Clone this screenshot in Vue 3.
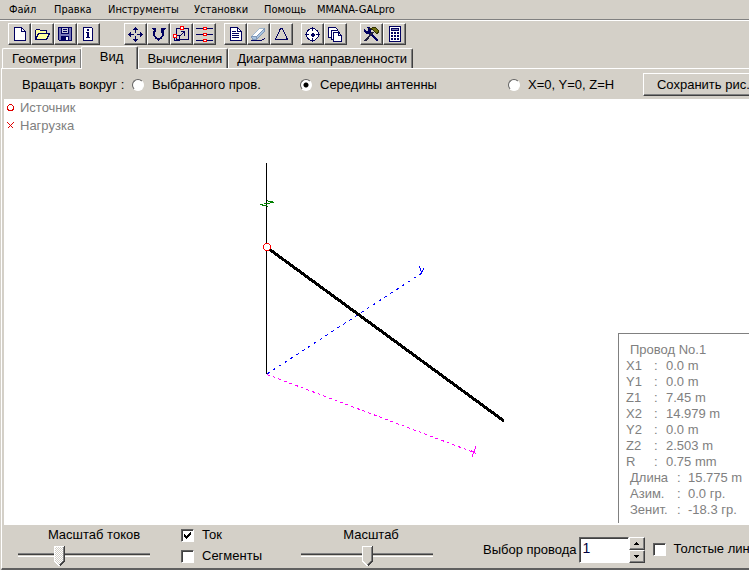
<script setup>
import { ref } from 'vue'

const menu = ['Файл', 'Правка', 'Инструменты', 'Установки', 'Помощь', 'MMANA-GALpro']
const tabs = ['Геометрия', 'Вид', 'Вычисления', 'Диаграмма направленности']
const activeTab = ref('Вид')

const N = '#000060'
const page = 'M3.5 1.5h7l4 4v9h-11z'
const toolGroups = [
  [
    { name: 'Новый', shapes: [{ d: page, fill: '#fff' }, { d: 'M10.5 1.5v4h4' }] },
    {
      name: 'Открыть',
      shapes: [
        { d: 'M1.5 13.5v-9l1-1h3l1 1h6v3', fill: '#ffffa0' },
        { d: 'M1.5 13.5l3-6h11l-3 6z', fill: '#ffffa0' }
      ]
    },
    {
      name: 'Сохранить',
      shapes: [
        { d: 'M1.5 1.5h13v13h-12l-1-1z', fill: '#7878b8' },
        { d: 'M4.5 1.5h7v6h-7z', fill: '#c8c8d8' },
        { d: 'M6 3.5h4M6 5.5h4' },
        { d: 'M4.5 10.5h7v4h-7z', fill: N },
        { d: 'M9 11h2v3h-2z', fill: '#fff', stroke: 'none' }
      ]
    },
    {
      name: 'Информация',
      shapes: [
        { d: 'M3.5 1.5h8l1 1v12h-9z', fill: '#fff' },
        { d: 'M7 3h2v2h-2zM6 6h3v5h1v1h-4v-1h1v-4h-1z', fill: N, stroke: 'none' }
      ]
    }
  ],
  [
    {
      name: 'Переместить',
      shapes: [
        { d: 'M8.500 1v6M8.500 10v6M1 8.500h6M10 8.500h6' },
        {
          d: 'M8 1h1v1h1v1h1v1h-5v-1h1v-1h1zM8 16h1v-1h1v-1h1v-1h-5v1h1v1h1zM1 8v1h1v1h1v1h1v-5h-1v1h-1v1zM16 8v1h-1v1h-1v1h-1v-5h1v1h1v1z',
          fill: N,
          stroke: 'none'
        }
      ]
    },
    {
      name: 'Повернуть',
      shapes: [
        { d: 'M3.500 5v4l2 3 3 1 3-1 2-3v-4M4.500 5v4l2 3 2 2 2-2 2-3v-4' },
        { d: 'M1 2h5v5zM16 2h-5v5z', fill: N, stroke: 'none' }
      ]
    },
    {
      name: 'Масштабировать',
      shapes: [
        { d: 'M3.500 2.500h12v11h-12z' },
        { d: 'M1.500 9.500h5v5h-5zM6.500 10.500l5-5M8 5.500h3.500v4' },
        { d: 'M7.500.5h3v3h-3zM.5 8.500h3v3h-3z', stroke: '#f00', fill: '#fff' }
      ]
    },
    {
      name: 'Сегментация',
      shapes: [
        { d: 'M0 2.500h17M0 8.500h17M0 14.500h17' },
        { d: 'M7.500 1.500h3v2h-3zM7.500 7.500h3v2h-3zM7.500 13.500h3v2h-3z', stroke: '#f00', fill: '#fff' }
      ]
    }
  ],
  [
    {
      name: 'Описание',
      shapes: [{ d: page, fill: '#fff' }, { d: 'M10.5 1.5v4h4M5 5.5h4M5 7.5h7M5 9.5h7M5 11.5h7' }]
    },
    {
      name: 'Очистить',
      shapes: [
        { d: 'M1 14.5h10l4-2', stroke: N },
        { d: 'M1.5 10.5l8-8h5l-8 8z', fill: '#fff', stroke: '#a0b8d0' },
        { d: 'M1.5 10.5h5v3h-4zM6.5 10.5l8-8v3l-8 8z', fill: '#a8c4e0', stroke: '#8098b8' }
      ]
    },
    { name: 'Треугольник', shapes: [{ d: 'M2.5 13.5h12l-5-11h-2z' }] }
  ],
  [
    {
      name: 'Центр',
      shapes: [
        { d: 'M8.5 2.5a6 6 0 1 1 0 12a6 6 0 1 1 0-12', fill: '#fff' },
        { d: 'M8.5 1v4M8.5 12v4M1 8.5h4M12 8.5h4' },
        { d: 'M8 7h1v1h1v1h-1v1h-1v-1h-1v-1h1z', fill: N }
      ]
    },
    {
      name: 'Копировать',
      shapes: [
        { d: 'M1.5 1.5h7l2 2v8h-9z', fill: '#fff' },
        { d: 'M4.5 4.5h6l2 2v7h-8z', fill: '#fff' },
        { d: 'M6.500 6.500h5l3 3v6h-8z', fill: '#fff' },
        { d: 'M11.5 6.5v3h3' }
      ]
    }
  ],
  [
    {
      name: 'Настройки',
      shapes: [
        { d: 'M6 6l9 9', width: 2 },
        { d: 'M3 1l2 2v2h-2l-2-2v3l2 2h3l2-2v-3l-2-2z', fill: N, stroke: 'none' },
        { d: 'M2 15l8-9', width: 2, stroke: '#202040' },
        { d: 'M7.500 2.500l3-1h2l3 3v2l-2 1-4-4z', fill: '#707010', stroke: '#303000' }
      ]
    },
    {
      name: 'Калькулятор',
      shapes: [
        { d: 'M3.5.5h11v15h-11z', fill: '#fff' },
        { d: 'M5.5 2.5h7v2h-7z', fill: '#8080b0' },
        { d: 'M5 7h2M8 7h2M11 7h2M5 10h2M8 10h2M11 10h2M5 13h2M8 13h2M11 13h2', width: 2 }
      ]
    }
  ]
]

const center = ref('antenna')
const showCurrent = ref(true)
const showSegments = ref(false)
const thickLines = ref(false)
const currentScale = ref(30)
const scale = ref(50)
const wire = ref(1)

const coords = [
  ['X1', '0.0 m'],
  ['Y1', '0.0 m'],
  ['Z1', '7.45 m'],
  ['X2', '14.979 m'],
  ['Y2', '0.0 m'],
  ['Z2', '2.503 m'],
  ['R', '0.75 mm']
]
const angles = [
  ['Длина', '15.775 m'],
  ['Азим.', '0.0 гр.'],
  ['Зенит.', '-18.3 гр.']
]
</script>

<template>
  <div class="window">
    <nav class="menu">
      <button v-for="m in menu" :key="m" type="button">{{ m }}</button>
    </nav>

    <div class="toolbar">
      <div v-for="(group, g) in toolGroups" :key="g" class="group">
        <button v-for="t in group" :key="t.name" type="button" class="tool" :aria-label="t.name">
          <svg width="17" height="17" viewBox="0 0 17 17">
            <path
              v-for="(s, i) in t.shapes"
              :key="i"
              :d="s.d"
              :fill="s.fill || 'none'"
              :stroke="s.stroke || N"
              :stroke-width="s.width || 1"
            />
          </svg>
        </button>
      </div>
    </div>

    <div class="tabs" role="tablist">
      <button
        v-for="t in tabs"
        :key="t"
        type="button"
        role="tab"
        class="tab"
        :class="{ active: t === activeTab }"
        :aria-selected="t === activeTab"
        @click="activeTab = t"
      >{{ t }}</button>
    </div>

    <main class="sheet">
      <div class="rotate">
        <span class="caption">Вращать вокруг :</span>
        <label><input v-model="center" type="radio" name="center" value="wire" />Выбранного пров.</label>
        <label><input v-model="center" type="radio" name="center" value="antenna" />Середины антенны</label>
        <label><input v-model="center" type="radio" name="center" value="origin" />X=0, Y=0, Z=H</label>
        <button type="button" class="save">Сохранить рис...</button>
      </div>

      <section class="canvas">
        <ul class="legend">
          <li>
            <svg width="8" height="8" viewBox="0 0 8 8"><circle cx="3.5" cy="3.5" r="3" /></svg>
            Источник
          </li>
          <li>
            <svg width="8" height="8" viewBox="0 0 8 8"><path d="M.5.5l6 6M6.5.5l-6 6" /></svg>
            Нагрузка
          </li>
        </ul>
        <svg class="scene" width="520" height="370" viewBox="0 0 520 370">
          <path d="M262.5 64v211" stroke="#000" />
          <path
            d="M256 105.500h3M258 106.500h5M260 104.500h6M266 103.500h4M264 102.500h5M263 101.500h1M263 107.500h1"
            stroke="#008000"
          />
          <path d="M263 275L418 174" stroke="#00f" stroke-dasharray="3 4" />
          <path d="M415 167l3 7M420 169l-3 6" stroke="#00f" />
          <path d="M263 275.500L470 353.500" stroke="#f0f" stroke-dasharray="3 3" />
          <path d="M472 347l-4 11M467 351l5 4" stroke="#f0f" />
          <path d="M265 150L500 322" stroke="#000" stroke-width="3" />
          <circle cx="263" cy="148" r="3.500" fill="#fff" stroke="#f00" />
        </svg>
        <div class="info">
          <div class="title">Провод No.1</div>
          <dl class="coords">
            <template v-for="[k, v] in coords" :key="k">
              <dt>{{ k }}</dt>
              <dd>:</dd>
              <dd>{{ v }}</dd>
            </template>
          </dl>
          <dl class="angles">
            <template v-for="[k, v] in angles" :key="k">
              <dt>{{ k }}</dt>
              <dd>:</dd>
              <dd>{{ v }}</dd>
            </template>
          </dl>
        </div>
      </section>

      <footer class="controls">
        <div class="slider">
          <label for="current-scale" class="wide">Масштаб токов</label>
          <input id="current-scale" v-model="currentScale" type="range" class="hatched" />
        </div>
        <div class="checks">
          <label><input v-model="showCurrent" type="checkbox" />Ток</label>
          <label><input v-model="showSegments" type="checkbox" />Сегменты</label>
        </div>
        <div class="slider">
          <label for="scale">Масштаб</label>
          <input id="scale" v-model="scale" type="range" />
        </div>
        <div class="picker">
          <label for="wire">Выбор провода</label>
          <input id="wire" v-model="wire" type="text" />
          <div class="spin">
            <button type="button" aria-label="Следующий" @click="wire++">
              <svg width="5" height="3" viewBox="0 0 5 3"><path d="M2 0h1v1h1v1h1v1h-5v-1h1v-1h1z" /></svg>
            </button>
            <button type="button" aria-label="Предыдущий" @click="wire--">
              <svg width="5" height="3" viewBox="0 0 5 3"><path d="M0 0h5v1h-1v1h-1v1h-1v-1h-1v-1h-1z" /></svg>
            </button>
          </div>
          <label class="thick"><input v-model="thickLines" type="checkbox" />Толстые линии</label>
        </div>
      </footer>
    </main>
  </div>
</template>

<style>
body {
  background: #d4d0c8;
  overflow: hidden;
}
</style>

<style scoped>
* {
  box-sizing: border-box;
}
.window {
  display: flex;
  flex-direction: column;
  min-height: 100vh;
  overflow: hidden;
  background: #d4d0c8;
  color: #000;
  font: 13px/16px "Liberation Sans", Arial, sans-serif;
  white-space: nowrap;
}
button,
input {
  margin: 0;
  padding: 0;
  border: 0;
  border-radius: 0;
  appearance: none;
  background: none;
  color: inherit;
  font: inherit;
}
svg {
  display: block;
  flex: none;
  shape-rendering: crispEdges;
}
.menu {
  display: grid;
  grid-template-columns: 45px 54px 86px 70px 53px auto;
  justify-content: start;
  justify-items: start;
  height: 21px;
  padding: 0 9px 1px;
  border-bottom: 1px solid #fff;
  box-shadow: inset 0 -1px #808080;
  font: 11px/16px "DejaVu Sans Condensed", "DejaVu Sans", sans-serif;
}
.toolbar {
  display: flex;
  padding: 2px 8px 0;
}
.group {
  display: flex;
  margin-right: 8px;
}
.group:nth-child(1) {
  margin-right: 24px;
}
.group:nth-child(4) {
  margin-right: 13px;
}
.tool {
  display: flex;
  align-items: center;
  justify-content: center;
  width: 23px;
  height: 22px;
  border: 1px solid;
  border-color: #fff #404040 #404040 #fff;
  box-shadow: inset -1px -1px #808080;
}
.tabs {
  position: relative;
  display: flex;
  align-items: flex-end;
  height: 23px;
  padding-left: 2px;
}
.tab {
  height: 20px;
  padding: 0 5px 0 9px;
  border: 1px solid;
  border-color: #fff #404040 transparent #fff;
  border-bottom: 0;
  border-radius: 2px 2px 0 0;
  box-shadow: inset -1px 0 #808080;
}
.tab:nth-child(n + 3) {
  padding-left: 8px;
}
.tab.active {
  z-index: 1;
  height: 23px;
  margin: 0 0 -1px -1px;
  padding: 0 14px 2px 18px;
  background: #d4d0c8;
}
.sheet {
  display: flex;
  flex: 1;
  flex-direction: column;
  margin-left: 1px;
  border-top: 1px solid #fff;
  border-left: 1px solid #fff;
  border-bottom: 2px solid #606060;
}
.rotate {
  display: grid;
  grid-template-columns: 110px 168px 208px 135px 128px;
  align-items: center;
  height: 30px;
  padding: 1px 0 0 20px;
}
.rotate label,
.checks label,
.thick {
  display: flex;
  align-items: center;
}
input[type="radio"] {
  width: 12px;
  height: 12px;
  margin-right: 8px;
  border: 1px solid;
  border-color: #606060 #fff #fff #606060;
  border-radius: 50%;
  background: #fff;
}
input[type="radio"]:checked {
  background: radial-gradient(circle, #000 2px, #fff 3px);
}
.save {
  height: 23px;
  border: 1px solid;
  border-color: #fff #404040 #404040 #fff;
  box-shadow: inset -1px -1px #808080;
}
.canvas {
  position: relative;
  flex: 1;
  margin-left: 2px;
  background: #fff;
  color: #808080;
}
.legend {
  position: absolute;
  top: 0;
  left: 3px;
  margin: 0;
  padding: 0;
  list-style: none;
  line-height: 18px;
}
.legend li {
  display: flex;
  align-items: center;
  gap: 5px;
}
.legend svg,
.scene {
  fill: none;
}
.legend svg {
  stroke: #e00000;
}
.info {
  position: absolute;
  right: -20px;
  bottom: 2px;
  width: 151px;
  padding: 8px 7px 5px;
  border: solid #808080;
  border-width: 1px 0 0 1px;
  background: #fff;
}
.info .title {
  padding-left: 4px;
}
.info dl {
  display: grid;
  margin: 0;
}
.info dd {
  margin: 0;
}
.coords {
  grid-template-columns: 28px 12px auto;
}
.angles {
  grid-template-columns: 47px 11px auto;
  padding-left: 4px;
}
.controls {
  display: grid;
  grid-template-columns: 163px 120px 182px 1fr;
  height: 43px;
  padding-left: 16px;
}
.slider {
  width: 132px;
  padding-top: 2px;
}
.slider label {
  display: block;
  padding-left: 8px;
  text-align: center;
}
.slider .wide {
  padding-left: 20px;
}
input[type="range"] {
  display: block;
  width: 132px;
  height: 20px;
  margin-top: 3px;
}
input[type="range"]::-webkit-slider-runnable-track {
  height: 20px;
  background: linear-gradient(#808080 0 1px, #404040 1px 2px, #d4d0c8 2px 3px, #fff 3px) 0 7px / 100% 4px no-repeat;
}
input[type="range"]::-webkit-slider-thumb {
  width: 11px;
  height: 20px;
  appearance: none;
  background: url("data:image/svg+xml,%3Csvg xmlns='http://www.w3.org/2000/svg' width='11' height='20' shape-rendering='crispEdges'%3E%3Cpath d='M0 0h11v15l-5 5h-1l-5-5z' fill='%23d4d0c8'/%3E%3Cpath d='M9.500 1v14l-4 4' fill='none' stroke='%23808080'/%3E%3Cpath d='M10.500 0v15l-5 5' fill='none' stroke='%23404040'/%3E%3Cpath d='M10 .5H.5v14.500l5 5' fill='none' stroke='%23fff'/%3E%3C/svg%3E");
}
input.hatched::-webkit-slider-thumb {
  background: url("data:image/svg+xml,%3Csvg xmlns='http://www.w3.org/2000/svg' width='11' height='20' shape-rendering='crispEdges'%3E%3Cdefs%3E%3Cpattern id='h' width='2' height='2' patternUnits='userSpaceOnUse'%3E%3Cpath d='M0 0h2v2H0z' fill='%23d4d0c8'/%3E%3Cpath d='M0 0h1v1H0zM1 1h1v1H1z' fill='%23fff'/%3E%3C/pattern%3E%3C/defs%3E%3Cpath d='M0 0h11v15l-5 5h-1l-5-5z' fill='url(%23h)'/%3E%3Cpath d='M9.500 1v14l-4 4' fill='none' stroke='%23808080'/%3E%3Cpath d='M10.500 0v15l-5 5' fill='none' stroke='%23404040'/%3E%3Cpath d='M10 .5H.5v14.500l5 5' fill='none' stroke='%23fff'/%3E%3C/svg%3E");
}
.checks {
  display: flex;
  flex-direction: column;
  gap: 5px;
  padding-top: 2px;
}
input[type="checkbox"] {
  width: 13px;
  height: 13px;
  margin-right: 8px;
  border: 1px solid;
  border-color: #606060 #fff #fff #606060;
  background: #fff;
  box-shadow: inset 1px 1px #404040;
}
input[type="checkbox"]:checked {
  background: #fff url("data:image/svg+xml,%3Csvg xmlns='http://www.w3.org/2000/svg' width='11' height='11' shape-rendering='crispEdges'%3E%3Cpath d='M2 4v3l2 2 5-5v-3l-5 5z'/%3E%3C/svg%3E") no-repeat;
}
.picker {
  display: flex;
  align-items: flex-start;
  padding-top: 12px;
}
.picker > label {
  margin: 5px 2px 0 0;
}
.picker input[type="text"] {
  width: 50px;
  height: 26px;
  padding: 0 0 4px 3px;
  border: 1px solid;
  border-color: #606060 #fff #fff #606060;
  background: #fff;
  box-shadow: inset 1px 1px #404040;
  color: #000040;
  font-size: 14px;
}
.spin {
  display: grid;
  width: 16px;
  height: 26px;
  margin-right: 8px;
}
.spin button {
  display: grid;
  place-items: center;
  border: 1px solid;
  border-color: #fff #404040 #404040 #fff;
  box-shadow: inset -1px -1px #808080;
}
.picker .thick {
  margin-top: 4px;
}
</style>
